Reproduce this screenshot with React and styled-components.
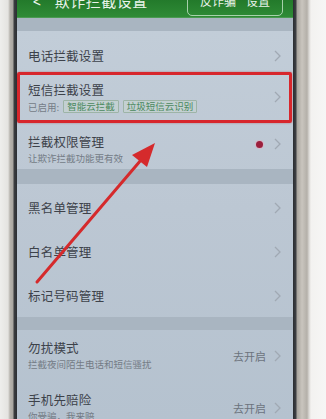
import React from "react";
import styled, { createGlobalStyle } from "styled-components";

const Global = createGlobalStyle`
  html, body { margin: 0; padding: 0; background: #f4f3f1; }
  body { width: 326px; height: 419px; overflow: hidden; font-family: "Noto Sans CJK SC", "Noto Sans", sans-serif; }
`;

const Page = styled.div`
  display: flex;
  width: 326px;
  height: 419px;
  overflow: hidden;
`;

const LeftBezel = styled.div`
  width: 17px;
  flex: none;
  background: linear-gradient(90deg, #eeeeec 0px, #e4e3e0 8px, #b7b4ae 10px, #a9a6a0 13px, #3b3d40 14px, #2c2f33 17px);
`;

const RightBezel = styled.div`
  flex: 1;
  background: linear-gradient(90deg, #2a2d31 0px, #3e4044 3px, #a8a49d 4px, #c9c5be 9px, #b4b0a9 14px, #d9d7d3 16px, #f3f2f0 18px, #f6f6f5 100%);
`;

const Screen = styled.div`
  position: relative;
  width: 276px;
  flex: none;
  display: flex;
  flex-direction: column;
  background: linear-gradient(180deg, #c3ced9 0%, #bcc7d3 50%, #b5c2cf 100%);
  overflow: hidden;
`;

const Header = styled.div`
  height: 18px;
  flex: none;
  display: flex;
  align-items: flex-end;
  padding: 0 10px 9px 16px;
  box-sizing: border-box;
  background: linear-gradient(180deg, #237a2b 0%, #2f8b36 100%);
  color: #e9f3ea;
  overflow: hidden;
  border-bottom: 1px solid #4b9a52;
`;

const Back = styled.span`
  font-size: 14px;
  line-height: 14px;
  margin-right: 14px;
  transform: scaleY(1.2);
`;

const Title = styled.span`
  flex: 1;
  font-size: 15px;
  line-height: 15px;
  letter-spacing: 0.5px;
`;

const HeaderButton = styled.span`
  display: flex;
  align-items: flex-end;
  gap: 10px;
  height: 24px;
  margin-bottom: -8px;
  padding: 0 12px 7px;
  border: 1px solid rgba(210, 235, 212, 0.75);
  border-radius: 5px;
  font-size: 12px;
  line-height: 14px;
  box-sizing: border-box;
`;

const Band = styled.div`
  height: ${(p) => p.$h}px;
  flex: none;
  background: #a9b5c1;
`;

const Row = styled.div`
  position: relative;
  height: ${(p) => p.$h}px;
  flex: none;
  box-sizing: border-box;
  padding: ${(p) => p.$pt || 0}px 12px 0 11px;
  display: flex;
  align-items: ${(p) => (p.$top ? "flex-start" : "center")};
  ${(p) =>
    p.$highlight &&
    `
    &::after {
      content: "";
      position: absolute;
      left: 0;
      right: 1px;
      top: -3px;
      bottom: -2px;
      border: 3px solid #d7262c;
      border-radius: 2px;
      box-shadow: 0 0 2px rgba(160, 20, 30, 0.5);
    }
  `}
`;

const Texts = styled.div`
  flex: 1;
  display: flex;
  flex-direction: column;
  gap: 2px;
`;

const Name = styled.div`
  font-size: 12.5px;
  line-height: 16px;
  color: #3d424a;
  letter-spacing: 0.2px;
`;

const Sub = styled.div`
  display: flex;
  align-items: center;
  gap: 4px;
  font-size: 9.5px;
  line-height: 12px;
  color: #747c86;
`;

const Chip = styled.span`
  height: 13px;
  padding: 0 3px;
  border: 1px solid #9db4a7;
  border-radius: 1px;
  box-sizing: border-box;
  font-size: 9.5px;
  line-height: 11px;
  color: #4b8a5f;
  background: #c3d0d2;
`;

const Right = styled.div`
  display: flex;
  align-items: center;
  gap: 8px;
  align-self: ${(p) => (p.$top ? "flex-start" : "center")};
  margin-top: ${(p) => p.$mt || 0}px;
`;

const Value = styled.span`
  font-size: 11px;
  line-height: 14px;
  color: #6c737d;
`;

const Dot = styled.span`
  width: 7px;
  height: 7px;
  border-radius: 50%;
  background: #9b1f3c;
  box-shadow: 0 0 0 1px rgba(230, 170, 190, 0.6);
  margin-right: 3px;
`;

const Arrow = styled.svg`
  position: absolute;
  left: 0;
  top: 0;
  width: 276px;
  height: 419px;
  pointer-events: none;
`;

const Chevron = () => (
  <svg width="7" height="12" viewBox="0 0 7 12">
    <polyline points="1,1 6,6 1,11" fill="none" stroke="#a0a9b3" strokeWidth="1.3" />
  </svg>
);

export default function App() {
  return (
    <Page>
      <Global />
      <LeftBezel />
      <Screen>
        <Header>
          <Back>&lt;</Back>
          <Title>欺诈拦截设置</Title>
          <HeaderButton>
            <span>反诈骗</span>
            <span>设置</span>
          </HeaderButton>
        </Header>
        <Band $h={13} />
        <Row $h={44} $pt={5}>
          <Texts>
            <Name>电话拦截设置</Name>
          </Texts>
          <Right>
            <Chevron />
          </Right>
        </Row>
        <Row $h={46} $pt={7} $top $highlight>
          <Texts>
            <Name>短信拦截设置</Name>
            <Sub>
              <span>已启用:</span>
              <Chip>智能云拦截</Chip>
              <Chip>垃圾短信云识别</Chip>
            </Sub>
          </Texts>
          <Right $top $mt={9}>
            <Chevron />
          </Right>
        </Row>
        <Row $h={48} $pt={13} $top>
          <Texts>
            <Name>拦截权限管理</Name>
            <Sub>让欺诈拦截功能更有效</Sub>
          </Texts>
          <Right $top $mt={4}>
            <Dot />
            <Chevron />
          </Right>
        </Row>
        <Band $h={15} />
        <Row $h={46} $pt={2}>
          <Texts>
            <Name>黑名单管理</Name>
          </Texts>
          <Right>
            <Chevron />
          </Right>
        </Row>
        <Row $h={44}>
          <Texts>
            <Name>白名单管理</Name>
          </Texts>
          <Right>
            <Chevron />
          </Right>
        </Row>
        <Row $h={43}>
          <Texts>
            <Name>标记号码管理</Name>
          </Texts>
          <Right>
            <Chevron />
          </Right>
        </Row>
        <Band $h={13} />
        <Row $h={52} $pt={10} $top>
          <Texts>
            <Name>勿扰模式</Name>
            <Sub>拦截夜间陌生电话和短信骚扰</Sub>
          </Texts>
          <Right $top $mt={9}>
            <Value>去开启</Value>
            <Chevron />
          </Right>
        </Row>
        <Row $h={52} $pt={10} $top>
          <Texts>
            <Name>手机先赔险</Name>
            <Sub>你受骗，我来赔</Sub>
          </Texts>
          <Right $top $mt={9}>
            <Value>去开启</Value>
            <Chevron />
          </Right>
        </Row>
        <Arrow viewBox="0 0 276 419">
          <line x1="20" y1="282" x2="124" y2="160" stroke="#d52a2c" strokeWidth="3" strokeLinecap="round" />
          <polygon points="138,143 130,167 115,155" fill="#d52a2c" />
        </Arrow>
      </Screen>
      <RightBezel />
    </Page>
  );
}
